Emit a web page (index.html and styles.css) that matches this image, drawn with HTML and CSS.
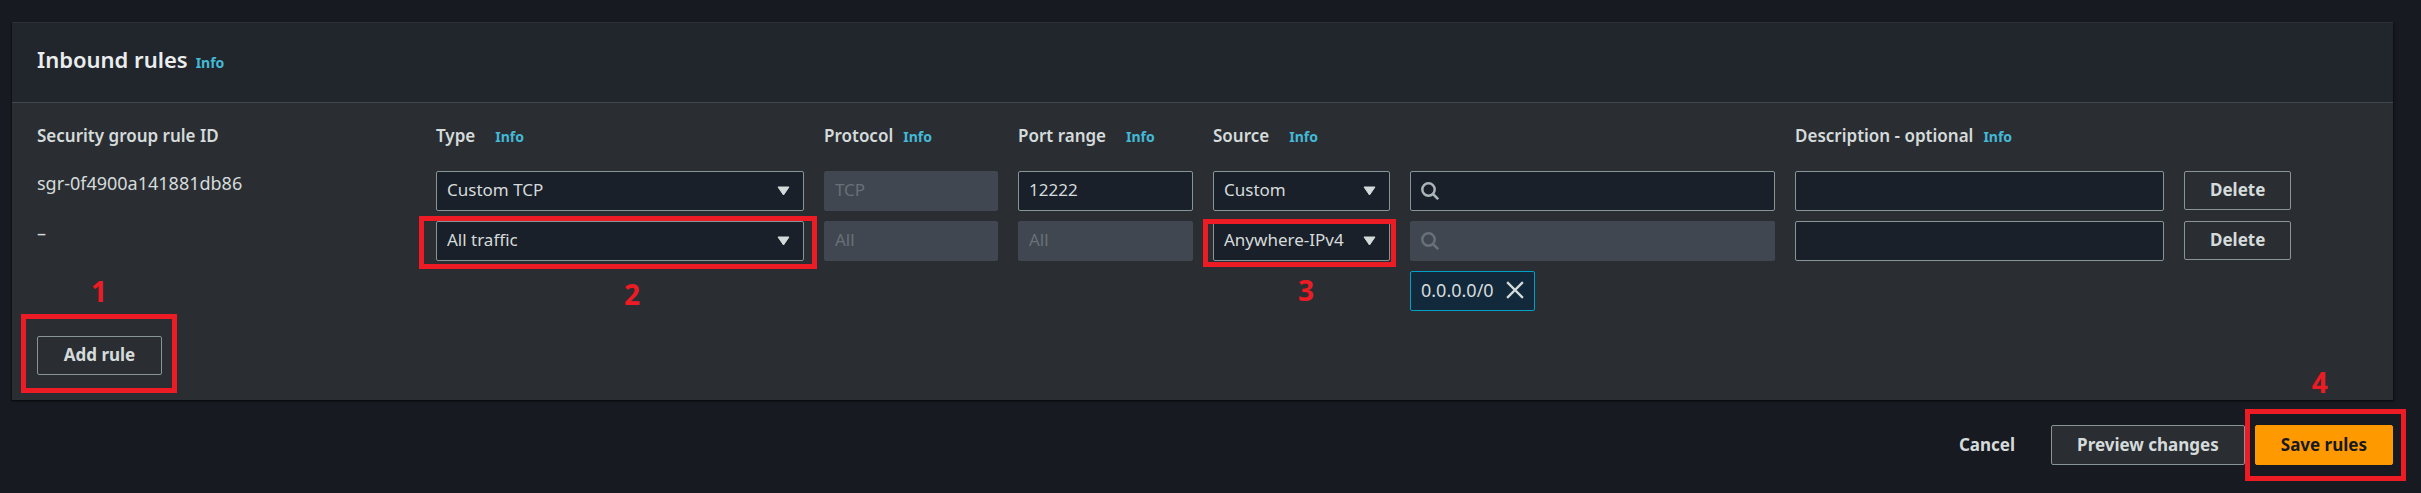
FILE: index.html
```html
<!DOCTYPE html>
<html lang="en">
<head>
<meta charset="utf-8">
<title>Edit inbound rules</title>
<link rel="stylesheet" href="styles.css">
</head>
<body>
<main class="page">
  <section class="panel">
    <header class="panel-header">
      <h2 class="panel-title">Inbound rules</h2>
      <a class="info" href="#info">Info</a>
    </header>
    <div class="panel-body">
      <table class="rules">
        <thead>
          <tr class="rule-row head-row">
            <th class="label" scope="col">Security group rule ID</th>
            <th class="label wide" scope="col">Type <a class="info" href="#type">Info</a></th>
            <th class="label" scope="col">Protocol <a class="info" href="#protocol">Info</a></th>
            <th class="label wide" scope="col">Port range <a class="info" href="#port">Info</a></th>
            <th class="label wide source-label" scope="col" colspan="2">Source <a class="info" href="#source">Info</a></th>
            <th class="label" scope="col">Description - optional <a class="info" href="#description">Info</a></th>
            <td></td>
          </tr>
        </thead>
        <tbody>
          <tr class="rule-row">
            <td class="rule-id">sgr-0f4900a141881db86</td>
            <td class="cell">
              <div class="select-wrap">
                <select class="control" aria-label="Type"><option>Custom TCP</option></select>
                <svg class="caret" viewBox="0 0 13 10" aria-hidden="true"><path d="M1 1h11L6.500 9z"/></svg>
              </div>
            </td>
            <td class="cell"><input class="control" type="text" value="TCP" aria-label="Protocol" disabled></td>
            <td class="cell"><input class="control" type="text" value="12222" aria-label="Port range"></td>
            <td class="cell">
              <div class="select-wrap">
                <select class="control" aria-label="Source"><option>Custom</option></select>
                <svg class="caret" viewBox="0 0 13 10" aria-hidden="true"><path d="M1 1h11L6.500 9z"/></svg>
              </div>
            </td>
            <td class="cell">
              <div class="search">
                <svg class="search-icon" viewBox="0 0 18 18" aria-hidden="true"><circle cx="7.500" cy="7.500" r="6.200"/><path d="M12 12l5.200 5.200"/></svg>
                <input class="control" type="search" aria-label="Search source">
              </div>
            </td>
            <td class="cell"><input class="control" type="text" aria-label="Description"></td>
            <td class="cell"><button class="button" type="button">Delete</button></td>
          </tr>
          <tr class="rule-row">
            <td class="rule-id">–</td>
            <td class="cell">
              <div class="select-wrap">
                <select class="control" aria-label="Type"><option>All traffic</option></select>
                <svg class="caret" viewBox="0 0 13 10" aria-hidden="true"><path d="M1 1h11L6.500 9z"/></svg>
                <span class="mark mark-type"><b class="mark-number">2</b></span>
              </div>
            </td>
            <td class="cell"><input class="control" type="text" value="All" aria-label="Protocol" disabled></td>
            <td class="cell"><input class="control" type="text" value="All" aria-label="Port range" disabled></td>
            <td class="cell">
              <div class="select-wrap">
                <select class="control" aria-label="Source"><option>Anywhere-IPv4</option></select>
                <svg class="caret" viewBox="0 0 13 10" aria-hidden="true"><path d="M1 1h11L6.500 9z"/></svg>
                <span class="mark mark-source"><b class="mark-number">3</b></span>
              </div>
            </td>
            <td class="cell">
              <div class="search search-disabled">
                <svg class="search-icon" viewBox="0 0 18 18" aria-hidden="true"><circle cx="7.500" cy="7.500" r="6.200"/><path d="M12 12l5.200 5.200"/></svg>
                <input class="control" type="search" aria-label="Search source" disabled>
              </div>
              <div class="token">
                <span>0.0.0.0/0</span>
                <button class="token-remove" type="button" aria-label="Remove 0.0.0.0/0">
                  <svg class="token-icon" viewBox="0 0 16 16" aria-hidden="true"><path d="M1 1l14 14M15 1L1 15"/></svg>
                </button>
              </div>
            </td>
            <td class="cell"><input class="control" type="text" aria-label="Description"></td>
            <td class="cell"><button class="button" type="button">Delete</button></td>
          </tr>
        </tbody>
      </table>
      <div class="anchor">
        <button class="button" type="button">Add rule</button>
        <span class="mark mark-add"><b class="mark-number">1</b></span>
      </div>
    </div>
  </section>
  <footer class="actions">
    <button class="button button-link" type="button">Cancel</button>
    <button class="button button-normal" type="button">Preview changes</button>
    <div class="anchor">
      <button class="button button-primary" type="button">Save rules</button>
      <span class="mark mark-save"><b class="mark-number">4</b></span>
    </div>
  </footer>
</main>
</body>
</html>
```

FILE: styles.css
```css
* {
  box-sizing: border-box;
}

body {
  margin: 0;
  background: #171a21;
  color: #d5dbdb;
  font: 17px/25px "Noto Sans", "Open Sans", sans-serif;
}

.page {
  padding: 22px 28px 28px 12px;
}

.panel {
  background: #2a2e33;
  border-top: 1px solid #2d3136;
  box-shadow: 0 1px 1px #0b0d10, 2px 1px 2px #121518, -1px 1px 1px #121518;
}

.panel-header {
  display: flex;
  align-items: baseline;
  gap: 8px;
  padding: 21px 25px 28px;
  background: #21252c;
  border-bottom: 1px solid #414750;
}

.panel-title {
  margin: 0;
  color: #eaeded;
  font-size: 22px;
  font-weight: 600;
  line-height: 30px;
}

.info {
  color: #44b9d6;
  font-size: 14px;
  font-weight: 700;
  line-height: 20px;
  text-decoration: none;
}

.panel-body {
  padding: 20px 25px 25px;
}

.rules,
.rules thead,
.rules tbody {
  display: grid;
  gap: 10px;
}

.rules {
  gap: 23px;
  margin-bottom: 25px;
}

.rule-row {
  display: grid;
  grid-template-columns:
    minmax(0, 379fr) minmax(0, 368fr) minmax(0, 174fr) minmax(0, 175fr)
    minmax(0, 177fr) minmax(0, 365fr) minmax(0, 369fr) minmax(0, 184fr);
  column-gap: 20px;
}

.rules th,
.rules td {
  padding: 0;
  text-align: left;
}

.label {
  display: flex;
  align-items: baseline;
  gap: 10px;
  font-size: 17px;
  font-weight: 600;
  white-space: nowrap;
}

.wide {
  gap: 20px;
}

.source-label {
  grid-column: span 2;
}

.rule-id {
  font-size: 18px;
}

.control {
  display: block;
  width: 100%;
  height: 40px;
  margin: 0;
  padding: 0 10px 3px;
  background: #1a2029;
  border: 1px solid #879596;
  border-radius: 2px;
  color: #d5dbdb;
  font: inherit;
  appearance: none;
}

.control:disabled {
  background: #414750;
  border-color: #414750;
  color: #687078;
  opacity: 1;
}

.select-wrap,
.search,
.anchor {
  position: relative;
}

.anchor {
  width: fit-content;
}

.caret {
  position: absolute;
  top: 15px;
  right: 14px;
  width: 13px;
  height: 10px;
  fill: #d5dbdb;
  stroke: #d5dbdb;
  stroke-width: 1;
  stroke-linejoin: round;
  pointer-events: none;
}

.search .control {
  padding-left: 40px;
}

.search-icon {
  position: absolute;
  top: 11px;
  left: 11px;
  width: 18px;
  height: 18px;
  fill: none;
  stroke: #aab7b8;
  stroke-width: 2.5;
}

.search-disabled .search-icon {
  stroke: #687078;
}

.token {
  display: flex;
  align-items: center;
  gap: 12px;
  width: fit-content;
  height: 40px;
  margin-top: 10px;
  padding: 0 10px 2px;
  background: #12293b;
  border: 1px solid #00a1c9;
  border-radius: 2px;
  font-size: 18px;
}

.token-remove {
  display: flex;
  padding: 0;
  background: none;
  border: 0;
}

.token-icon {
  width: 18px;
  height: 18px;
  fill: none;
  stroke: #d5dbdb;
  stroke-width: 2;
}

.button {
  display: block;
  height: 39px;
  padding: 0 25px 2px;
  background: none;
  border: 1px solid #879596;
  border-radius: 2px;
  color: #d5dbdb;
  font: inherit;
  font-size: 17px;
  font-weight: 700;
  white-space: nowrap;
}

.panel-body .anchor .button {
  min-width: 125px;
}

.actions {
  display: flex;
  justify-content: flex-end;
  gap: 10px;
  margin-top: 25px;
}

.actions .button {
  height: 40px;
}

.actions .button-link {
  border-color: transparent;
}

.button-normal {
  background: #2a2e33;
}

.button-primary {
  background: #ff9900;
  border-color: #ff9900;
  color: #16191f;
}

.mark {
  position: absolute;
  border: 5px solid #ed1c24;
  pointer-events: none;
}

.mark-number {
  position: absolute;
  color: #ed1c24;
  font-size: 28px;
  line-height: 28px;
}

.mark-add {
  inset: -22px -15px -18px -16px;
}

.mark-add .mark-number {
  left: 65px;
  bottom: 83px;
}

.mark-type {
  inset: -5px -13px -8px -17px;
}

.mark-type .mark-number {
  left: 200px;
  top: 59px;
}

.mark-source {
  inset: -2px -6px -6px -10px;
}

.mark-source .mark-number {
  left: 90px;
  top: 52px;
}

.mark-save {
  inset: -16px -13px -16px -10px;
}

.mark-save .mark-number {
  left: 62px;
  bottom: 80px;
}
```
